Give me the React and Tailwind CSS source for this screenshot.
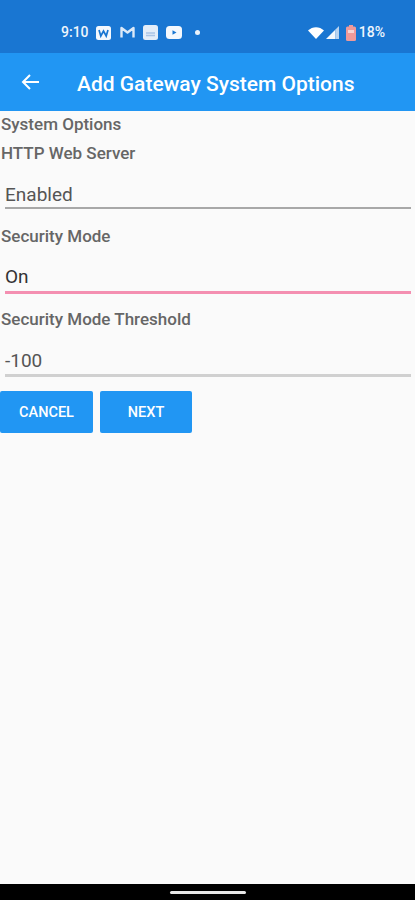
const fields = [
    { label: "HTTP Web Server", value: "Enabled", line: "h-[2px] bg-[#a8a8a8]", text: "text-[#555555]", labelBox: "h-[31px]", valueBox: "mt-[15px]" },
    { label: "Security Mode", value: "On", line: "h-[3px] bg-[#f48fb1] mt-[2px]", text: "text-[#333333]", labelBox: "h-[27px] mt-[14px]", valueBox: "mt-[16px]" },
    { label: "Security Mode Threshold", value: "-100", line: "h-[3px] bg-[#d0d0d0] mt-[1px]", text: "text-[#555555]", labelBox: "h-[27px] mt-[12px]", valueBox: "mt-[17px]" },
];

const StatusIcons = () => (
    <div className="flex items-center">
        <svg className="ml-[7px] w-[15px] h-[14px]" viewBox="0 0 15 14">
            <rect width="15" height="14" rx="2.5" fill="#f4f8fd" />
            <path d="M3 4l1.8 6 2.7-5 2.7 5L12 4" fill="none" stroke="#1976d2" strokeWidth="1.7" />
        </svg>
        <svg className="ml-[9px] w-[15px] h-[13px]" viewBox="0 0 15 13">
            <path d="M1.5 11.5V2l6 4.5 6-4.5v9.5" fill="none" stroke="#dce9f8" strokeWidth="2.4" strokeLinejoin="round" />
        </svg>
        <svg className="ml-[8px] w-[15px] h-[15px]" viewBox="0 0 15 15">
            <rect width="15" height="15" rx="2.5" fill="#e3edf9" />
            <path d="M3 8h9M3 10.5h9" stroke="#a9c4e6" strokeWidth="1.5" />
        </svg>
        <svg className="ml-[8px] w-[16px] h-[13px]" viewBox="0 0 16 13">
            <rect width="16" height="13" rx="3.5" fill="#f4f8fd" />
            <path d="M6.5 4.2v4.6l4-2.3z" fill="#1976d2" />
        </svg>
        <div className="ml-[13px] w-[5px] h-[5px] rounded-full bg-[#eaf2fb]" />
    </div>
);

const SystemIcons = () => (
    <div className="flex items-center">
        <svg className="w-[16px] h-[12px]" viewBox="0 0 16 12">
            <path d="M0 3.6C4.5-1 11.5-1 16 3.6L8 12z" fill="#ffffff" />
        </svg>
        <svg className="ml-[2px] w-[13px] h-[13px]" viewBox="0 0 13 13">
            <path d="M9.5 3.5V13H0z" fill="#f4f8fd" />
            <path d="M13 0v13H9.5V3.5z" fill="#b9d3f0" />
        </svg>
        <svg className="ml-[7px] w-[10px] h-[16px]" viewBox="0 0 10 16">
            <rect x="3" width="4" height="2" fill="#ef9a9a" />
            <rect y="1.5" width="10" height="14.5" rx="1.5" fill="#ef9a9a" />
            <rect x="2" y="5" width="6" height="3" fill="#f7d4d4" />
        </svg>
        <span className="ml-[3px] text-[14px] font-medium text-[#eef5fc]">18%</span>
    </div>
);

const App = () => {
    return (
        <div className="w-[415px] h-[900px] flex flex-col bg-[#fafafa] overflow-hidden font-['Roboto',sans-serif]">
            {/* status bar */}
            <div className="h-[53px] shrink-0 bg-[#1976d2] flex items-center justify-between pl-[61px] pr-[30px] pt-[12px]">
                <div className="flex items-center">
                    <span className="text-[14px] font-medium text-[#eef5fc]">9:10</span>
                    <StatusIcons />
                </div>
                <SystemIcons />
            </div>

            {/* app bar */}
            <div className="h-[58px] shrink-0 bg-[#2196f3] flex items-center pl-[21px]">
                <svg className="w-[18px] h-[18px] mb-[1px]" viewBox="0 0 18 18" fill="none" stroke="#ffffff" strokeWidth="2">
                    <path d="M18 9H2M9 2L2 9l7 7" />
                </svg>
                <h1 className="ml-[38px] mt-[5px] text-[21px] font-medium text-[#ffffff] whitespace-nowrap">Add Gateway System Options</h1>
            </div>

            {/* form */}
            <div className="flex-1 flex flex-col">
                <div className="h-[27px] pl-[1px] flex items-center text-[17px] font-medium text-[#666666]">System Options</div>
                {fields.map((f) => (
                    <div key={f.label}>
                        <div className={`${f.labelBox} pl-[1px] flex items-center text-[17px] font-medium text-[#666666]`}>{f.label}</div>
                        <div className={`${f.valueBox} pl-[5px] h-[23px] flex items-center text-[19px] ${f.text}`}>{f.value}</div>
                        <div className={`ml-[5px] w-[406px] ${f.line}`} />
                    </div>
                ))}
                <div className="mt-[14px] flex gap-[7px]">
                    <button className="w-[93px] h-[42px] pt-[1px] rounded-[2px] bg-[#2196f3] text-[14.5px] font-medium text-[#ffffff]">CANCEL</button>
                    <button className="w-[92px] h-[42px] pt-[1px] rounded-[2px] bg-[#2196f3] text-[14.5px] font-medium text-[#ffffff]">NEXT</button>
                </div>
            </div>

            {/* nav bar */}
            <div className="h-[16px] shrink-0 bg-[#000000] flex items-center justify-center">
                <div className="w-[76px] h-[3px] rounded-full bg-[#e8e8e8]" />
            </div>
        </div>
    );
};

export default App;
